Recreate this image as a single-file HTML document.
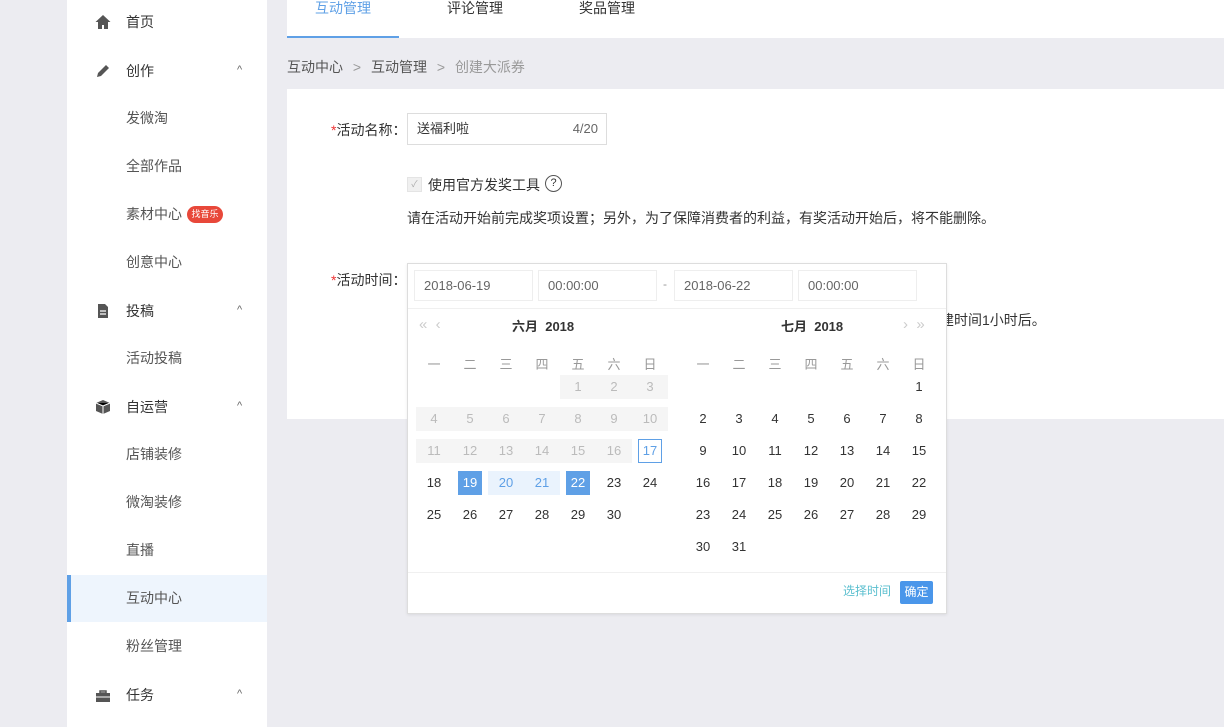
<!DOCTYPE html>
<html><head><meta charset="utf-8"><style>
*{margin:0;padding:0;box-sizing:border-box}
body{width:1224px;height:727px;overflow:hidden;background:#ececf1;font-family:"Liberation Sans","Noto Sans CJK SC",sans-serif;font-size:14px;color:#333;position:relative}
.a{position:absolute;white-space:nowrap}
.side{position:absolute;left:67px;top:0;width:200px;height:727px;background:#fff}
.mi{position:absolute;left:59px;font-size:14px;color:#333;line-height:20px}
.si{position:absolute;left:59px;font-size:14px;color:#555;line-height:20px}
.car{position:absolute;left:170px;font-size:11px;color:#666}
.ic{position:absolute;left:28px}
.c{position:absolute;width:36px;height:24px;line-height:24px;text-align:center;font-size:13px;color:#333}
.d{color:#bbb;background:#f5f5f5}
.w{position:absolute;width:36px;text-align:center;font-size:13px;color:#999;top:354px}
.inp{position:absolute;top:270px;height:31px;width:119px;border:1px solid #eee;font-size:13px;color:#666;line-height:29px;padding-left:9px}
</style></head><body>
<div class="side">
  <svg class="ic" style="top:14px" width="16" height="16" viewBox="0 0 16 16"><path d="M8 1L0.5 8H3v7h4v-4h2v4h4V8h2.5z" fill="#555"/></svg>
  <div class="mi" style="top:12px">首页</div>
  <svg class="ic" style="top:63px" width="16" height="16" viewBox="0 0 16 16"><path d="M2 14l1-4 8-8 3 3-8 8z" fill="#555"/></svg>
  <div class="mi" style="top:61px">创作</div><div class="car" style="top:64px">^</div>
  <div class="si" style="top:108px">发微淘</div>
  <div class="si" style="top:156px">全部作品</div>
  <div class="si" style="top:204px">素材中心</div>
  <div class="a" style="left:120px;top:206px;width:36px;height:17px;border-radius:9px;background:#e8483a;color:#fff;font-size:9px;line-height:17px;text-align:center">找音乐</div>
  <div class="si" style="top:252px">创意中心</div>
  <svg class="ic" style="top:303px" width="16" height="16" viewBox="0 0 16 16"><path d="M3 1h7l3 3v11H3z" fill="#555"/><path d="M5 8h6M5 11h6" stroke="#fff" stroke-width="1.2"/></svg>
  <div class="mi" style="top:301px">投稿</div><div class="car" style="top:304px">^</div>
  <div class="si" style="top:348px">活动投稿</div>
  <svg class="ic" style="top:399px" width="16" height="16" viewBox="0 0 16 16"><path d="M8 1l7 3v8l-7 3-7-3V4z" fill="#555"/><path d="M1 4l7 3 7-3M8 7v8" stroke="#fff" stroke-width="1"/></svg>
  <div class="mi" style="top:397px">自运营</div><div class="car" style="top:400px">^</div>
  <div class="si" style="top:444px">店铺装修</div>
  <div class="si" style="top:492px">微淘装修</div>
  <div class="si" style="top:540px">直播</div>
  <div class="a" style="left:0;top:575px;width:200px;height:47px;background:#eef5fd;border-left:4px solid #5fa0e6"></div>
  <div class="si" style="top:588px">互动中心</div>
  <div class="si" style="top:636px">粉丝管理</div>
  <svg class="ic" style="top:688px" width="16" height="16" viewBox="0 0 16 16"><path d="M5 3h6v2H5z" fill="none" stroke="#555" stroke-width="1.5"/><rect x="1" y="5" width="14" height="9" fill="#555"/><path d="M1 9h14" stroke="#fff"/></svg>
  <div class="mi" style="top:685px">任务</div><div class="car" style="top:688px">^</div>
</div>
<div class="a" style="left:287px;top:0;width:937px;height:38px;background:#fff"></div>
<div class="a" style="left:287px;top:36px;width:112px;height:2px;background:#5fa0e6"></div>
<div class="a" style="left:315px;top:-2px;color:#5fa0e6">互动管理</div>
<div class="a" style="left:447px;top:-2px">评论管理</div>
<div class="a" style="left:579px;top:-2px">奖品管理</div>
<div class="a" style="left:287px;top:57px;color:#555">互动中心 <span style="color:#999;margin:0 6px">&gt;</span> 互动管理 <span style="color:#999;margin:0 6px">&gt;</span> <span style="color:#999">创建大派券</span></div>
<div class="a" style="left:287px;top:89px;width:937px;height:330px;background:#fff"></div>
<div class="a" style="left:331px;top:120px"><span style="color:#e33">*</span>活动名称：</div>
<div class="a" style="left:407px;top:113px;width:200px;height:32px;border:1px solid #ddd;padding-left:9px;line-height:30px;font-size:13px">送福利啦<span style="position:absolute;right:8px;color:#666">4/20</span></div>
<div class="a" style="left:407px;top:177px;width:15px;height:15px;background:#f0f0f0;border:1px solid #e4e4e4;font-size:9px;color:#aaa;text-align:center;line-height:13px">✓</div>
<div class="a" style="left:428px;top:175px">使用官方发奖工具</div>
<div class="a" style="left:545px;top:175px;width:17px;height:17px;border:1px solid #555;border-radius:50%;font-size:11px;text-align:center;line-height:15px">?</div>
<div class="a" style="left:407px;top:208px;font-size:14px">请在活动开始前完成奖项设置；另外，为了保障消费者的利益，有奖活动开始后，将不能删除。</div>
<div class="a" style="left:331px;top:270px"><span style="color:#e33">*</span>活动时间：</div>
<div class="a" style="left:940px;top:310px">建时间1小时后。</div>
<div class="a" style="left:407px;top:263px;width:540px;height:351px;background:#fff;border:1px solid #ddd;box-shadow:0 1px 3px rgba(0,0,0,.08)"></div>
<div class="inp" style="left:414px">2018-06-19</div>
<div class="inp" style="left:538px">00:00:00</div>
<div class="a" style="left:663px;top:277px;color:#999;font-size:12px">-</div>
<div class="inp" style="left:674px">2018-06-22</div>
<div class="inp" style="left:798px">00:00:00</div>
<div class="a" style="left:408px;top:308px;width:538px;height:1px;background:#f0f0f0"></div>
<div class="a" style="left:408px;top:572px;width:538px;height:1px;background:#f0f0f0"></div>
<div class="a" style="left:419px;top:316px;color:#ccc;font-size:15px">«&nbsp;&nbsp;‹</div>
<div class="a" style="left:903px;top:316px;color:#ccc;font-size:15px">›&nbsp;&nbsp;»</div>
<div class="a" style="left:512px;top:316px;font-size:13px;font-weight:bold;color:#333">六月&nbsp; 2018</div>
<div class="a" style="left:781px;top:316px;font-size:13px;font-weight:bold;color:#333">七月&nbsp; 2018</div>
<div class="w" style="left:416px">一</div><div class="w" style="left:452px">二</div><div class="w" style="left:488px">三</div><div class="w" style="left:524px">四</div><div class="w" style="left:560px">五</div><div class="w" style="left:596px">六</div><div class="w" style="left:632px">日</div>
<div class="w" style="left:685px">一</div><div class="w" style="left:721px">二</div><div class="w" style="left:757px">三</div><div class="w" style="left:793px">四</div><div class="w" style="left:829px">五</div><div class="w" style="left:865px">六</div><div class="w" style="left:901px">日</div>
<!-- June -->
<div class="c d" style="left:560px;top:375px">1</div><div class="c d" style="left:596px;top:375px">2</div><div class="c d" style="left:632px;top:375px">3</div>
<div class="c d" style="left:416px;top:407px">4</div><div class="c d" style="left:452px;top:407px">5</div><div class="c d" style="left:488px;top:407px">6</div><div class="c d" style="left:524px;top:407px">7</div><div class="c d" style="left:560px;top:407px">8</div><div class="c d" style="left:596px;top:407px">9</div><div class="c d" style="left:632px;top:407px">10</div>
<div class="c d" style="left:416px;top:439px">11</div><div class="c d" style="left:452px;top:439px">12</div><div class="c d" style="left:488px;top:439px">13</div><div class="c d" style="left:524px;top:439px">14</div><div class="c d" style="left:560px;top:439px">15</div><div class="c d" style="left:596px;top:439px">16</div>
<div class="c" style="left:638px;top:439px;width:24px;border:1px solid #5fa0e6;color:#5fa0e6;line-height:22px">17</div>
<div class="c" style="left:416px;top:471px">18</div>
<div class="c" style="left:458px;top:471px;width:24px;background:#5fa0e6;color:#fff">19</div>
<div class="c" style="left:488px;top:471px;background:#eaf3fd;color:#5fa0e6">20</div>
<div class="c" style="left:524px;top:471px;background:#eaf3fd;color:#5fa0e6">21</div>
<div class="c" style="left:566px;top:471px;width:24px;background:#5fa0e6;color:#fff">22</div>
<div class="c" style="left:596px;top:471px">23</div><div class="c" style="left:632px;top:471px">24</div>
<div class="c" style="left:416px;top:503px">25</div><div class="c" style="left:452px;top:503px">26</div><div class="c" style="left:488px;top:503px">27</div><div class="c" style="left:524px;top:503px">28</div><div class="c" style="left:560px;top:503px">29</div><div class="c" style="left:596px;top:503px">30</div>
<!-- July -->
<div class="c" style="left:901px;top:375px">1</div>
<div class="c" style="left:685px;top:407px">2</div><div class="c" style="left:721px;top:407px">3</div><div class="c" style="left:757px;top:407px">4</div><div class="c" style="left:793px;top:407px">5</div><div class="c" style="left:829px;top:407px">6</div><div class="c" style="left:865px;top:407px">7</div><div class="c" style="left:901px;top:407px">8</div>
<div class="c" style="left:685px;top:439px">9</div><div class="c" style="left:721px;top:439px">10</div><div class="c" style="left:757px;top:439px">11</div><div class="c" style="left:793px;top:439px">12</div><div class="c" style="left:829px;top:439px">13</div><div class="c" style="left:865px;top:439px">14</div><div class="c" style="left:901px;top:439px">15</div>
<div class="c" style="left:685px;top:471px">16</div><div class="c" style="left:721px;top:471px">17</div><div class="c" style="left:757px;top:471px">18</div><div class="c" style="left:793px;top:471px">19</div><div class="c" style="left:829px;top:471px">20</div><div class="c" style="left:865px;top:471px">21</div><div class="c" style="left:901px;top:471px">22</div>
<div class="c" style="left:685px;top:503px">23</div><div class="c" style="left:721px;top:503px">24</div><div class="c" style="left:757px;top:503px">25</div><div class="c" style="left:793px;top:503px">26</div><div class="c" style="left:829px;top:503px">27</div><div class="c" style="left:865px;top:503px">28</div><div class="c" style="left:901px;top:503px">29</div>
<div class="c" style="left:685px;top:535px">30</div><div class="c" style="left:721px;top:535px">31</div>
<div class="a" style="left:843px;top:582px;font-size:12px;color:#5bbfcf">选择时间</div>
<div class="a" style="left:900px;top:581px;width:33px;height:23px;background:#4a96ea;color:#fff;font-size:12px;line-height:23px;text-align:center;border-radius:2px">确定</div>
</body></html>
